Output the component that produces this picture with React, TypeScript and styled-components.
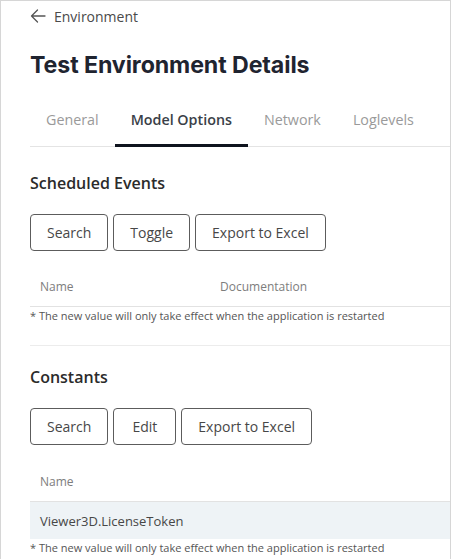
import * as React from "react";
import styled, { createGlobalStyle } from "styled-components";

const GlobalStyle = createGlobalStyle`
  html, body {
    margin: 0;
    padding: 0;
    background: #ffffff;
  }
  body {
    font-family: "Open Sans", "Liberation Sans", sans-serif;
    color: #333333;
  }
`;

const Frame = styled.div`
  width: 451px;
  height: 559px;
  box-sizing: border-box;
  border: 1px solid #d6d6d6;
  border-bottom: none;
  overflow: hidden;
  padding-left: 29px;
`;

const BackLink = styled.a`
  display: flex;
  align-items: center;
  gap: 8px;
  height: 20px;
  margin-top: 5px;
  font-size: 14px;
  color: #4a4a4a;
  text-decoration: none;
  cursor: pointer;
`;

const Title = styled.h1`
  margin: 23px 0 0 0;
  font-family: Inter, "Open Sans", sans-serif;
  font-size: 23.2px;
  line-height: 32px;
  font-weight: 700;
  color: #1f2430;
  letter-spacing: -0.1px;
`;

const TabBar = styled.div`
  display: flex;
  margin-top: 13px;
  border-bottom: 1px solid #e4e4e4;
  width: 600px;
`;

const Tab = styled.div<{ $active?: boolean }>`
  padding: 0 16px;
  height: 50px;
  display: flex;
  align-items: center;
  font-size: 14.3px;
  font-weight: ${(p) => (p.$active ? 600 : 400)};
  color: ${(p) => (p.$active ? "#3a3f48" : "#9a9a9a")};
  border-bottom: 3px solid ${(p) => (p.$active ? "#0f141e" : "transparent")};
  margin-bottom: -1px;
`;

const Section = styled.section<{ $divider?: boolean; $top: number }>`
  padding-top: ${(p) => p.$top}px;
  border-bottom: ${(p) => (p.$divider ? "1px solid #ececec" : "none")};
  padding-bottom: ${(p) => (p.$divider ? "21px" : "0")};
  width: 600px;
`;

const SectionTitle = styled.h2`
  margin: 0;
  font-size: 16px;
  line-height: 24px;
  font-weight: 600;
  color: #2b2b2b;
`;

const Toolbar = styled.div`
  display: flex;
  gap: 5px;
  margin-top: 19px;
`;

const Button = styled.button`
  height: 37px;
  min-width: 63px;
  padding: 0 16px;
  box-sizing: border-box;
  border: 1px solid #5c5c5c;
  border-radius: 4px;
  background: #ffffff;
  font-family: "Open Sans", "Liberation Sans", sans-serif;
  font-size: 14px;
  color: #474747;
  cursor: pointer;
`;

const HeaderRow = styled.div<{ $height: number }>`
  display: flex;
  height: ${(p) => p.$height}px;
  align-items: flex-end;
  padding: 0 0 11px 10px;
  box-sizing: border-box;
  border-bottom: 1px solid #e2e2e2;
`;

const HeaderCell = styled.div<{ $width?: number }>`
  width: ${(p) => (p.$width ? `${p.$width}px` : "auto")};
  font-size: 12px;
  line-height: 17px;
  color: #7d7d7d;
`;

const DataRow = styled.div`
  display: flex;
  align-items: center;
  height: 37px;
  padding-left: 10px;
  background: #eef3f6;
  font-size: 13px;
  color: #474747;
`;

const Note = styled.div`
  font-size: 11px;
  line-height: 16px;
  color: #555555;
  margin-top: 1px;
`;

function ArrowLeft() {
  return (
    <svg width="16" height="16" viewBox="0 0 16 16" fill="none">
      <path
        d="M15 8H1.5M7.5 2L1.5 8L7.5 14"
        stroke="#555"
        strokeWidth="1.3"
        strokeLinecap="round"
        strokeLinejoin="round"
      />
    </svg>
  );
}

const note = "* The new value will only take effect when the application is restarted";

export default function App() {
  return (
    <>
      <GlobalStyle />
      <Frame>
        <BackLink>
          <ArrowLeft />
          Environment
        </BackLink>
        <Title>Test Environment Details</Title>
        <TabBar>
          <Tab>General</Tab>
          <Tab $active>Model Options</Tab>
          <Tab>Network</Tab>
          <Tab>Loglevels</Tab>
        </TabBar>

        <Section $divider $top={24}>
          <SectionTitle>Scheduled Events</SectionTitle>
          <Toolbar>
            <Button>Search</Button>
            <Button>Toggle</Button>
            <Button>Export to Excel</Button>
          </Toolbar>
          <HeaderRow $height={56}>
            <HeaderCell $width={180}>Name</HeaderCell>
            <HeaderCell>Documentation</HeaderCell>
          </HeaderRow>
          <Note>{note}</Note>
        </Section>

        <Section $top={19}>
          <SectionTitle>Constants</SectionTitle>
          <Toolbar>
            <Button>Search</Button>
            <Button>Edit</Button>
            <Button>Export to Excel</Button>
          </Toolbar>
          <HeaderRow $height={57}>
            <HeaderCell>Name</HeaderCell>
          </HeaderRow>
          <DataRow>Viewer3D.LicenseToken</DataRow>
          <Note>{note}</Note>
        </Section>
      </Frame>
    </>
  );
}
